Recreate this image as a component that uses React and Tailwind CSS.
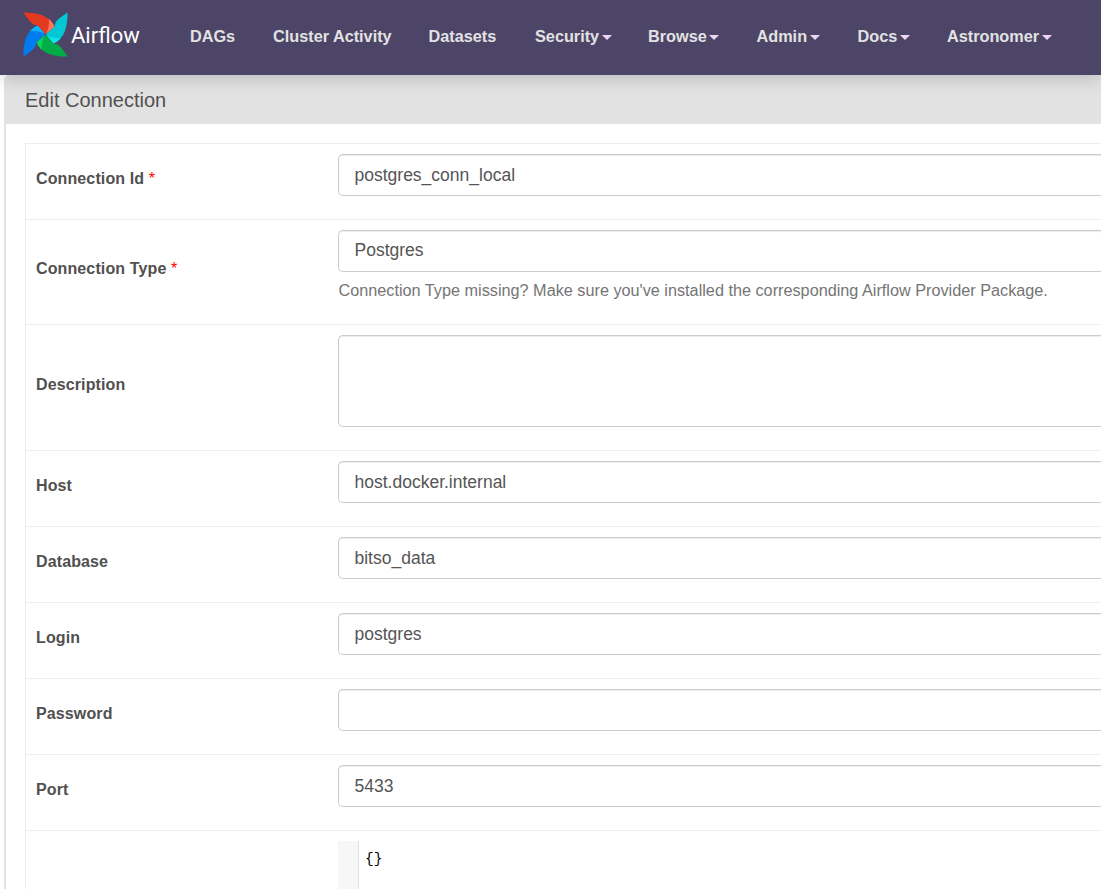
const nav = [
  { label: "DAGs", pos: "w-[83px]" },
  { label: "Cluster Activity", pos: "w-[155.5px]" },
  { label: "Datasets", pos: "w-[106.5px]" },
  { label: "Security", pos: "w-[113px]", menu: true },
  { label: "Browse", pos: "w-[108.5px]", menu: true },
  { label: "Admin", pos: "w-[101px]", menu: true },
  { label: "Docs", pos: "w-[89.5px]", menu: true },
  { label: "Astronomer", pos: "w-[120px]", menu: true },
];

const rows = [
  { label: "Connection Id", required: true, value: "postgres_conn_local", row: "h-[76px]", lift: "pb-[6px]" },
  { label: "Connection Type", required: true, value: "Postgres", row: "h-[105px]", lift: "pb-[7px]", leading: "leading-[38px]", help: "Connection Type missing? Make sure you've installed the corresponding Airflow Provider Package." },
  { label: "Description", area: true, row: "h-[126px]", lift: "pb-[6px]" },
  { label: "Host", value: "host.docker.internal", row: "h-[76px]", lift: "pb-[6px]" },
  { label: "Database", value: "bitso_data", row: "h-[76px]", lift: "pb-[6px]" },
  { label: "Login", value: "postgres", row: "h-[76px]", lift: "pb-[6px]" },
  { label: "Password", value: "", row: "h-[76px]", lift: "pb-[6px]" },
  { label: "Port", value: "5433", row: "h-[76px]", lift: "pb-[6px]" },
];

const blades = [
  { angle: 0, main: "#e43921", fold: "#ff7557" },
  { angle: 90, main: "#00c7d4", fold: "#11e1ee" },
  { angle: 180, main: "#00ad46", fold: "#04d659" },
  { angle: 270, main: "#017cee", fold: "#0cb6ff" },
];

function Pinwheel() {
  return (
    <svg className="h-[45px] w-[45px] shrink-0" viewBox="0 0 46 46" aria-hidden="true">
      {blades.map((b) => (
        <g key={b.angle} transform={`rotate(${b.angle} 23 23)`}>
          <path fill={b.main} d="M.7.9C.5.5.8.4 1.2.4 13.5.6 21.5 2.8 26.3 7.2L28.5 13 23 23 15.1 13.7C11.5 13.6 9 11.8 6.5 8.9Z" />
          <path fill={b.fold} d="M26.2 7C29 9.2 31.2 12 32.3 15.1L23 23C25.8 18.5 27.3 12.8 26.2 7Z" />
        </g>
      ))}
      <circle cx="23" cy="23" r="0.9" fill="#51504f" />
    </svg>
  );
}

function Header() {
  return (
    <header className="relative z-10 flex h-[75px] items-start bg-[#4c4567] shadow-[0_2px_18px_rgba(0,0,0,0.2)]">
      <a className="flex w-[190px] shrink-0 pt-[11.5px] pl-[22.5px]">
        <Pinwheel />
        <span className="mt-[11.5px] ml-[3.5px] font-['Roboto',sans-serif] text-[22px] leading-[26px] text-white">Airflow</span>
      </a>
      <nav className="flex shrink-0 pt-[26px]">
        {nav.map((n) => (
          <a key={n.label} className={`flex shrink-0 items-center text-[16.25px] leading-5 font-bold whitespace-nowrap text-[#e2e2e2] ${n.pos}`}>
            {n.label}
            {n.menu && <span className="mt-[3px] ml-[2.5px] border-x-[5px] border-t-[5px] border-x-transparent border-t-[#edd5f1]" />}
          </a>
        ))}
      </nav>
    </header>
  );
}

function Row({ label, required, value, area, row, lift, help, leading = "leading-[40px]" }) {
  return (
    <div className={`flex shrink-0 border-t border-[#eee] ${row}`}>
      <div className={`flex w-[312px] shrink-0 items-center pl-[10px] text-base font-bold tracking-[0.12px] text-[#51504f] ${lift}`}>
        {label}
        {required && <span className="ml-[4.5px] text-base font-normal text-[#f00]">*</span>}
      </div>
      <div className="min-w-0 flex-1 pt-[10px]">
        <div className={`flex rounded-[5px] rounded-r-none border border-r-0 border-[#ccc] bg-white pl-[15.5px] text-[17.5px] text-[#555] shadow-[inset_0_1px_1px_rgba(0,0,0,0.075)] ${leading} ${area ? "h-[92px]" : "h-[42px]"}`}>
          {value}
        </div>
        {help && <p className="pt-[7px] pl-[0.5px] text-[16.24px] leading-[22px] whitespace-nowrap text-[#757575]">{help}</p>}
      </div>
    </div>
  );
}

export default function App() {
  return (
    <div className="flex h-[889px] w-[1101px] flex-col overflow-hidden bg-white font-['Liberation_Sans',Arial,sans-serif]">
      <Header />
      <main className="ml-1 flex min-h-0 flex-1 flex-col overflow-hidden rounded-tl-[5px] border-l-2 border-[#e2e2e2]">
        <h1 className="h-[49px] shrink-0 bg-[#e2e2e2] pt-[12px] pl-[19px] text-[20px] leading-[26px] text-[#51504f]">Edit Connection</h1>
        <div className="mt-[19px] ml-[19px] flex min-h-0 flex-1 flex-col overflow-hidden border-l border-[#eee]">
          {rows.map((r) => (
            <Row key={r.label} {...r} />
          ))}
          <div className="flex min-h-0 flex-1 border-t border-[#eee] pt-[10px] pl-[312px]">
            <div className="w-[21px] border-r border-[#ddd] bg-[#f7f7f7]" />
            <code className="pt-[8px] pl-[6px] font-['Liberation_Mono',monospace] text-[14.5px] leading-[20px] text-black">{"{}"}</code>
          </div>
        </div>
      </main>
    </div>
  );
}
